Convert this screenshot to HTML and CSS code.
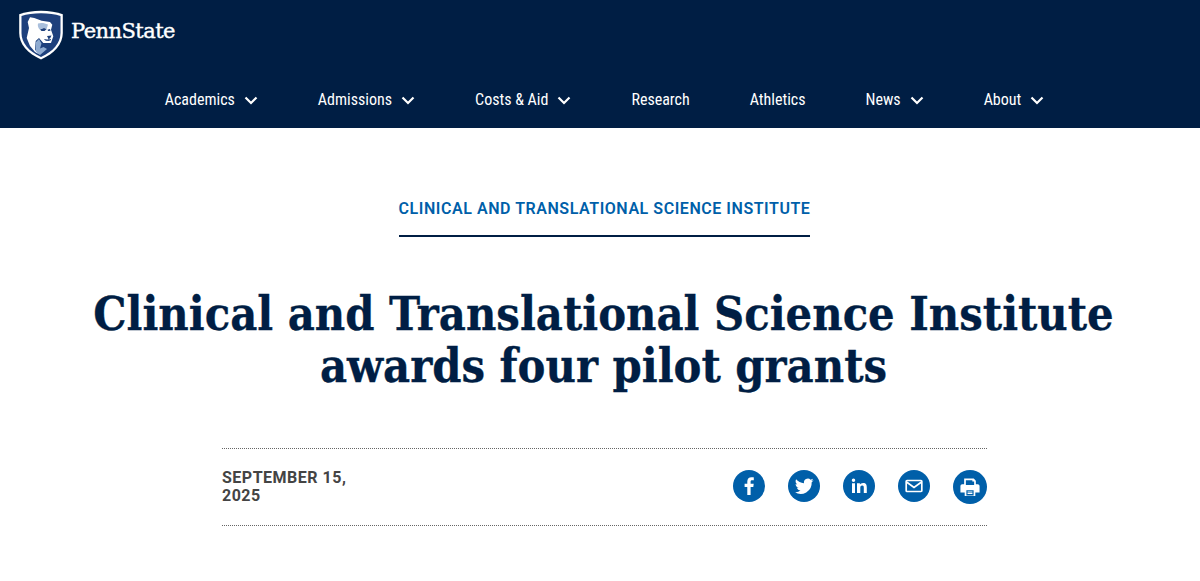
FILE: index.html
```html
<!DOCTYPE html>
<html lang="en">
<head>
<meta charset="utf-8">
<title>Clinical and Translational Science Institute awards four pilot grants</title>
<link rel="stylesheet" href="styles.css">
</head>
<body>
<header class="site-header">
  <a class="brand" href="#">
    <svg class="shield" viewBox="0 0 46 50" width="46" height="50" aria-hidden="true">
      <path d="M23 .8C15 .8 7 2 1.200 4.200V23c0 11 8.500 20.500 21.800 26.500C36.300 43.500 44.800 34 44.800 23V4.200C39 2 31 .8 23 .8Z" fill="#fff"/>
      <path d="M23 3.200C16 3.200 8.500 4.200 3.500 6V23c0 10 7.500 18.500 19.500 24C35 41.500 42.500 33 42.500 23V6C37.500 4.200 30 3.200 23 3.200Z" fill="#1e407c"/>
      <path d="M12 7.300 16.300 8l7.400 2.700L32 12l2.300 2.700-1.300 5 2.300 6.600L33 33h-7.700L21 28l-3.300 3L17 39.700l5 5-5-2.700-5-6-3.300-8L11 18l-1.300-6Z" fill="#fff"/>
      <path d="M20 13.500c3-1 7-.5 10 1l-1.500 5-3-1.500-4 1.500c-1.500-2-2-4-1.500-6Z" fill="#a9bfdc"/>
      <path d="M22 19.500l4-1.500 2.500 1.300-2 1.700h-3Z" fill="#1e407c"/>
      <path d="M29.500 19.700l2.500-.7.500 1.800-2.300.3Z" fill="#1e407c"/>
      <path d="M29 26l4.500-.5-1.500 3-1.700 0ZM26.500 29.500c2 1.300 4.500 1.300 6.500 0" fill="#1e407c"/>
      <path d="M26.500 29.500c2 1.300 4.500 1.300 6.500 0M30.800 27v2.600" fill="none" stroke="#1e407c" stroke-width="1"/>
      <path d="M18 32l3-3 2.500 4.500-1.500 5 3.500-1.500 3.500 2-7 6-4.500-4Z" fill="#8fabd0"/>
    </svg>
    <span class="wordmark">PennState</span>
  </a>
  <nav class="main-nav">
    <a href="#">Academics<svg class="chev" viewBox="0 0 14 9"><path d="M1.500 1.500 7 7l5.500-5.500"/></svg></a>
    <a href="#">Admissions<svg class="chev" viewBox="0 0 14 9"><path d="M1.500 1.500 7 7l5.500-5.500"/></svg></a>
    <a href="#">Costs &amp; Aid<svg class="chev" viewBox="0 0 14 9"><path d="M1.500 1.500 7 7l5.500-5.500"/></svg></a>
    <a href="#">Research</a>
    <a href="#">Athletics</a>
    <a href="#">News<svg class="chev" viewBox="0 0 14 9"><path d="M1.500 1.500 7 7l5.500-5.500"/></svg></a>
    <a href="#">About<svg class="chev" viewBox="0 0 14 9"><path d="M1.500 1.500 7 7l5.500-5.500"/></svg></a>
  </nav>
</header>
<main class="article">
  <div class="kicker"><a href="#">Clinical and Translational Science Institute</a></div>
  <h1>Clinical and Translational Science Institute awards four pilot grants</h1>
  <div class="meta">
    <div class="date">September 15, 2025</div>
    <div class="share">
      <a href="#" aria-label="Facebook"><svg viewBox="0 0 32 32"><path fill="#fff" d="M17.600 25v-8h2.700l.4-3.200h-3.100v-2c0-.9.300-1.500 1.600-1.500h1.600V7.400c-.3 0-1.300-.1-2.400-.1-2.400 0-4.100 1.500-4.100 4.200v2.300h-2.700V17h2.700v8Z"/></svg></a>
      <a href="#" aria-label="Twitter"><svg viewBox="0 0 32 32"><path fill="#fff" d="M25.500 10.300c-.7.300-1.400.5-2.200.6.800-.5 1.400-1.200 1.700-2.100-.7.400-1.600.8-2.400.9a3.900 3.900 0 0 0-6.600 3.500c-3.200-.2-6-1.700-7.900-4-.3.600-.5 1.200-.5 2 0 1.300.7 2.500 1.700 3.200-.6 0-1.200-.2-1.700-.5 0 1.900 1.300 3.400 3.100 3.800-.6.200-1.200.2-1.800.1.500 1.500 1.900 2.600 3.600 2.700a7.800 7.800 0 0 1-5.800 1.600 11 11 0 0 0 17-9.800c.8-.5 1.400-1.200 1.900-2Z"/></svg></a>
      <a href="#" aria-label="LinkedIn"><svg viewBox="0 0 32 32"><path fill="#fff" d="M9 13.200h3v9.800H9Zm1.500-4.700a1.750 1.750 0 1 1 0 3.500 1.750 1.750 0 0 1 0-3.500ZM14 13.200h2.900v1.400c.5-.9 1.600-1.700 3.200-1.700 3.100 0 3.700 2 3.700 4.700V23h-3v-4.800c0-1.200 0-2.600-1.600-2.600s-1.900 1.200-1.900 2.500V23H14Z"/></svg></a>
      <a href="#" aria-label="Email"><svg viewBox="0 0 32 32"><path fill="none" stroke="#fff" stroke-width="1.700" d="M9 10.500h14a.8.800 0 0 1 .8.800v9.400a.8.800 0 0 1-.8.800H9a.8.800 0 0 1-.8-.8v-9.400a.8.800 0 0 1 .8-.8Z"/><path fill="none" stroke="#fff" stroke-width="1.700" d="m8.500 12 7.500 5.500 7.500-5.500"/></svg></a>
      <a href="#" aria-label="Print"><svg viewBox="0 0 32 32"><path fill="#fff" fill-rule="evenodd" d="M10.500 8h9l2 2v3.300h1.700c1.100 0 1.800.8 1.800 1.800v6h-4v3.400H11v-3.400H7v-6c0-1 .7-1.800 1.800-1.800h1.700Zm1.600 1.600v4.400h7.800v-3.200h-1.700V9.600ZM12.600 19v4.900h6.800V19Zm1.100 1.200h4.600v.9h-4.600Zm0 1.500h4.600v.9h-4.600Z"/></svg></a>
    </div>
  </div>
</main>
</body>
</html>
```
FILE: styles.css
```css
* { box-sizing: border-box; }
html, body { margin: 0; padding: 0; }
body { background: #fff; font-family: Roboto, "Liberation Sans", sans-serif; overflow: hidden; }
a { text-decoration: none; color: inherit; }

.site-header { height: 128px; background: #001e44; padding: 10px 0 0 18px; }
.brand { display: flex; align-items: center; gap: 7px; height: 50px; }
.shield { display: block; flex: none; }
.wordmark { font-family: "DejaVu Serif", serif; font-size: 21px; font-weight: 400; color: #fff; letter-spacing: -.55px; margin-top: -8px; -webkit-text-stroke: .4px #fff; }

.main-nav { display: flex; justify-content: center; gap: 60px; margin-top: 29px; padding-right: 9px; color: #fff; font-size: 16px; font-weight: 450; line-height: 22px; }
.main-nav a { display: flex; align-items: center; gap: 9px; font-stretch: 75%; }
.chev { width: 14px; height: 9px; fill: none; stroke: #fff; stroke-width: 2.200; }

.article { display: flex; flex-direction: column; align-items: center; padding-left: 9px; }
.kicker { margin-top: 71px; padding-bottom: 16px; border-bottom: 2px solid #001e44; color: #005fa9; font-size: 16px; font-weight: 600; line-height: 20px; letter-spacing: .55px; text-transform: uppercase; }
h1 { margin: 51px 0 0 -2px; width: 1100px; text-align: center; font-family: "DejaVu Serif", serif; font-stretch: 87.5%; font-size: 46.500px; font-weight: 700; line-height: 52px; color: #001e44; -webkit-text-stroke: .3px #001e44; }
.meta { width: 765px; margin-top: 56px; height: 78px; display: flex; justify-content: space-between; align-items: center; border-top: 1px dotted #666; border-bottom: 1px dotted #666; }
.date { width: 135px; color: #444; font-size: 16px; font-weight: 700; line-height: 18px; letter-spacing: .5px; text-transform: uppercase; }
.share { display: flex; gap: 23px; align-items: flex-start; height: 34px; }
.share a { display: block; width: 32px; height: 32px; border-radius: 50%; background: #005fa9; }
.share a:last-child { width: 34px; height: 34px; }
.share svg { display: block; width: 100%; height: 100%; }
```
